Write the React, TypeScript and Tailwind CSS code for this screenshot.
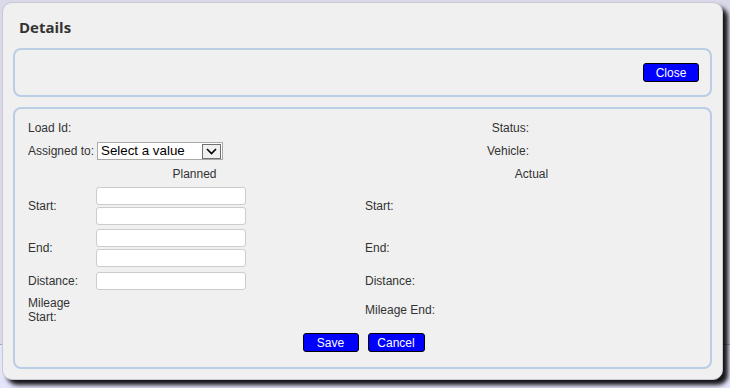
function Field() {
  return <div className="w-[150px] h-[18px] bg-white border border-[#cccccc] rounded-[3px]" />
}

function BlueButton({ label, className }: { label: string; className?: string }) {
  return (
    <button
      type="button"
      className={"h-[19px] bg-[#0000ff] border border-black rounded-[3px] text-white text-[12px] leading-none " + (className ?? "")}
    >
      {label}
    </button>
  )
}

export default function App() {
  return (
    <div className="w-[730px] h-[388px] overflow-hidden pt-[2px] pl-[2px] bg-[linear-gradient(to_bottom,#d9d9ea_344px,#a8a8c0_344px,#a8a8c0_345px,#e4e4fb_345px)] font-['Liberation_Sans',Arial,sans-serif]">
      <div className="w-[721px] h-[378px] bg-[#f0f0f0] border border-[#c8c8d2] rounded-[10px] shadow-[5px_5px_4px_rgba(0,0,0,0.9)] px-[10px]">
        <h2 className="pt-[14px] pl-[6px] h-[45px] leading-[20px] text-[15px] font-bold text-[#333333] font-['Open_Sans',sans-serif]">
          Details
        </h2>
        <div className="h-[49px] border-2 border-[#b9cde5] rounded-[8px] flex items-center justify-end pr-[11px]">
          <BlueButton label="Close" className="w-[56px]" />
        </div>
        <div className="mt-[10px] h-[262px] border-2 border-[#b9cde5] rounded-[8px] pl-[13px] pt-[8px] text-[12px] text-[#333333]">
          <div className="flex gap-[4px]">
            {/* left half */}
            <div className="w-[333px]">
              <div className="h-[22px] flex items-center">Load Id:</div>
              <div className="h-[24px] flex items-center">
                <span className="w-[69px]">Assigned to:</span>
                <div className="w-[126px] h-[18px] bg-white border border-[#a9a9a9] flex items-center justify-between pl-[3px] pr-[1px]">
                  <span className="text-[13.33px] text-black leading-none">Select a value</span>
                  <span className="w-[19px] h-[15px] border border-[#707070] bg-[#f0f0f0] flex items-center justify-center">
                    <svg width="11" height="7" viewBox="0 0 11 7">
                      <path d="M1 1 L5.5 5.5 L10 1" fill="none" stroke="#000" strokeWidth="1.6" />
                    </svg>
                  </span>
                </div>
              </div>
              <div className="h-[22px] flex items-center justify-center">Planned</div>
              <div className="h-[42px] flex items-center">
                <span className="w-[68px]">Start:</span>
                <div className="flex flex-col gap-[2px]">
                  <Field />
                  <Field />
                </div>
              </div>
              <div className="h-[42px] flex items-center">
                <span className="w-[68px]">End:</span>
                <div className="flex flex-col gap-[2px]">
                  <Field />
                  <Field />
                </div>
              </div>
              <div className="h-[24px] flex items-center">
                <span className="w-[68px]">Distance:</span>
                <Field />
              </div>
              <div className="h-[34px] flex items-center">
                <span className="w-[60px] leading-[14px]">Mileage Start:</span>
              </div>
            </div>
            {/* right half */}
            <div className="w-[333px]">
              <div className="h-[22px] flex items-center">
                <span className="w-[164px] text-right">Status:</span>
              </div>
              <div className="h-[24px] flex items-center">
                <span className="w-[164px] text-right">Vehicle:</span>
              </div>
              <div className="h-[22px] flex items-center justify-center">Actual</div>
              <div className="h-[42px] flex items-center">Start:</div>
              <div className="h-[42px] flex items-center">End:</div>
              <div className="h-[24px] flex items-center">Distance:</div>
              <div className="h-[34px] flex items-center">Mileage End:</div>
            </div>
          </div>
          <div className="pt-[6px] flex justify-center gap-[9px] pr-[11px]">
            <BlueButton label="Save" className="w-[56px]" />
            <BlueButton label="Cancel" className="w-[57px]" />
          </div>
        </div>
      </div>
    </div>
  )
}
